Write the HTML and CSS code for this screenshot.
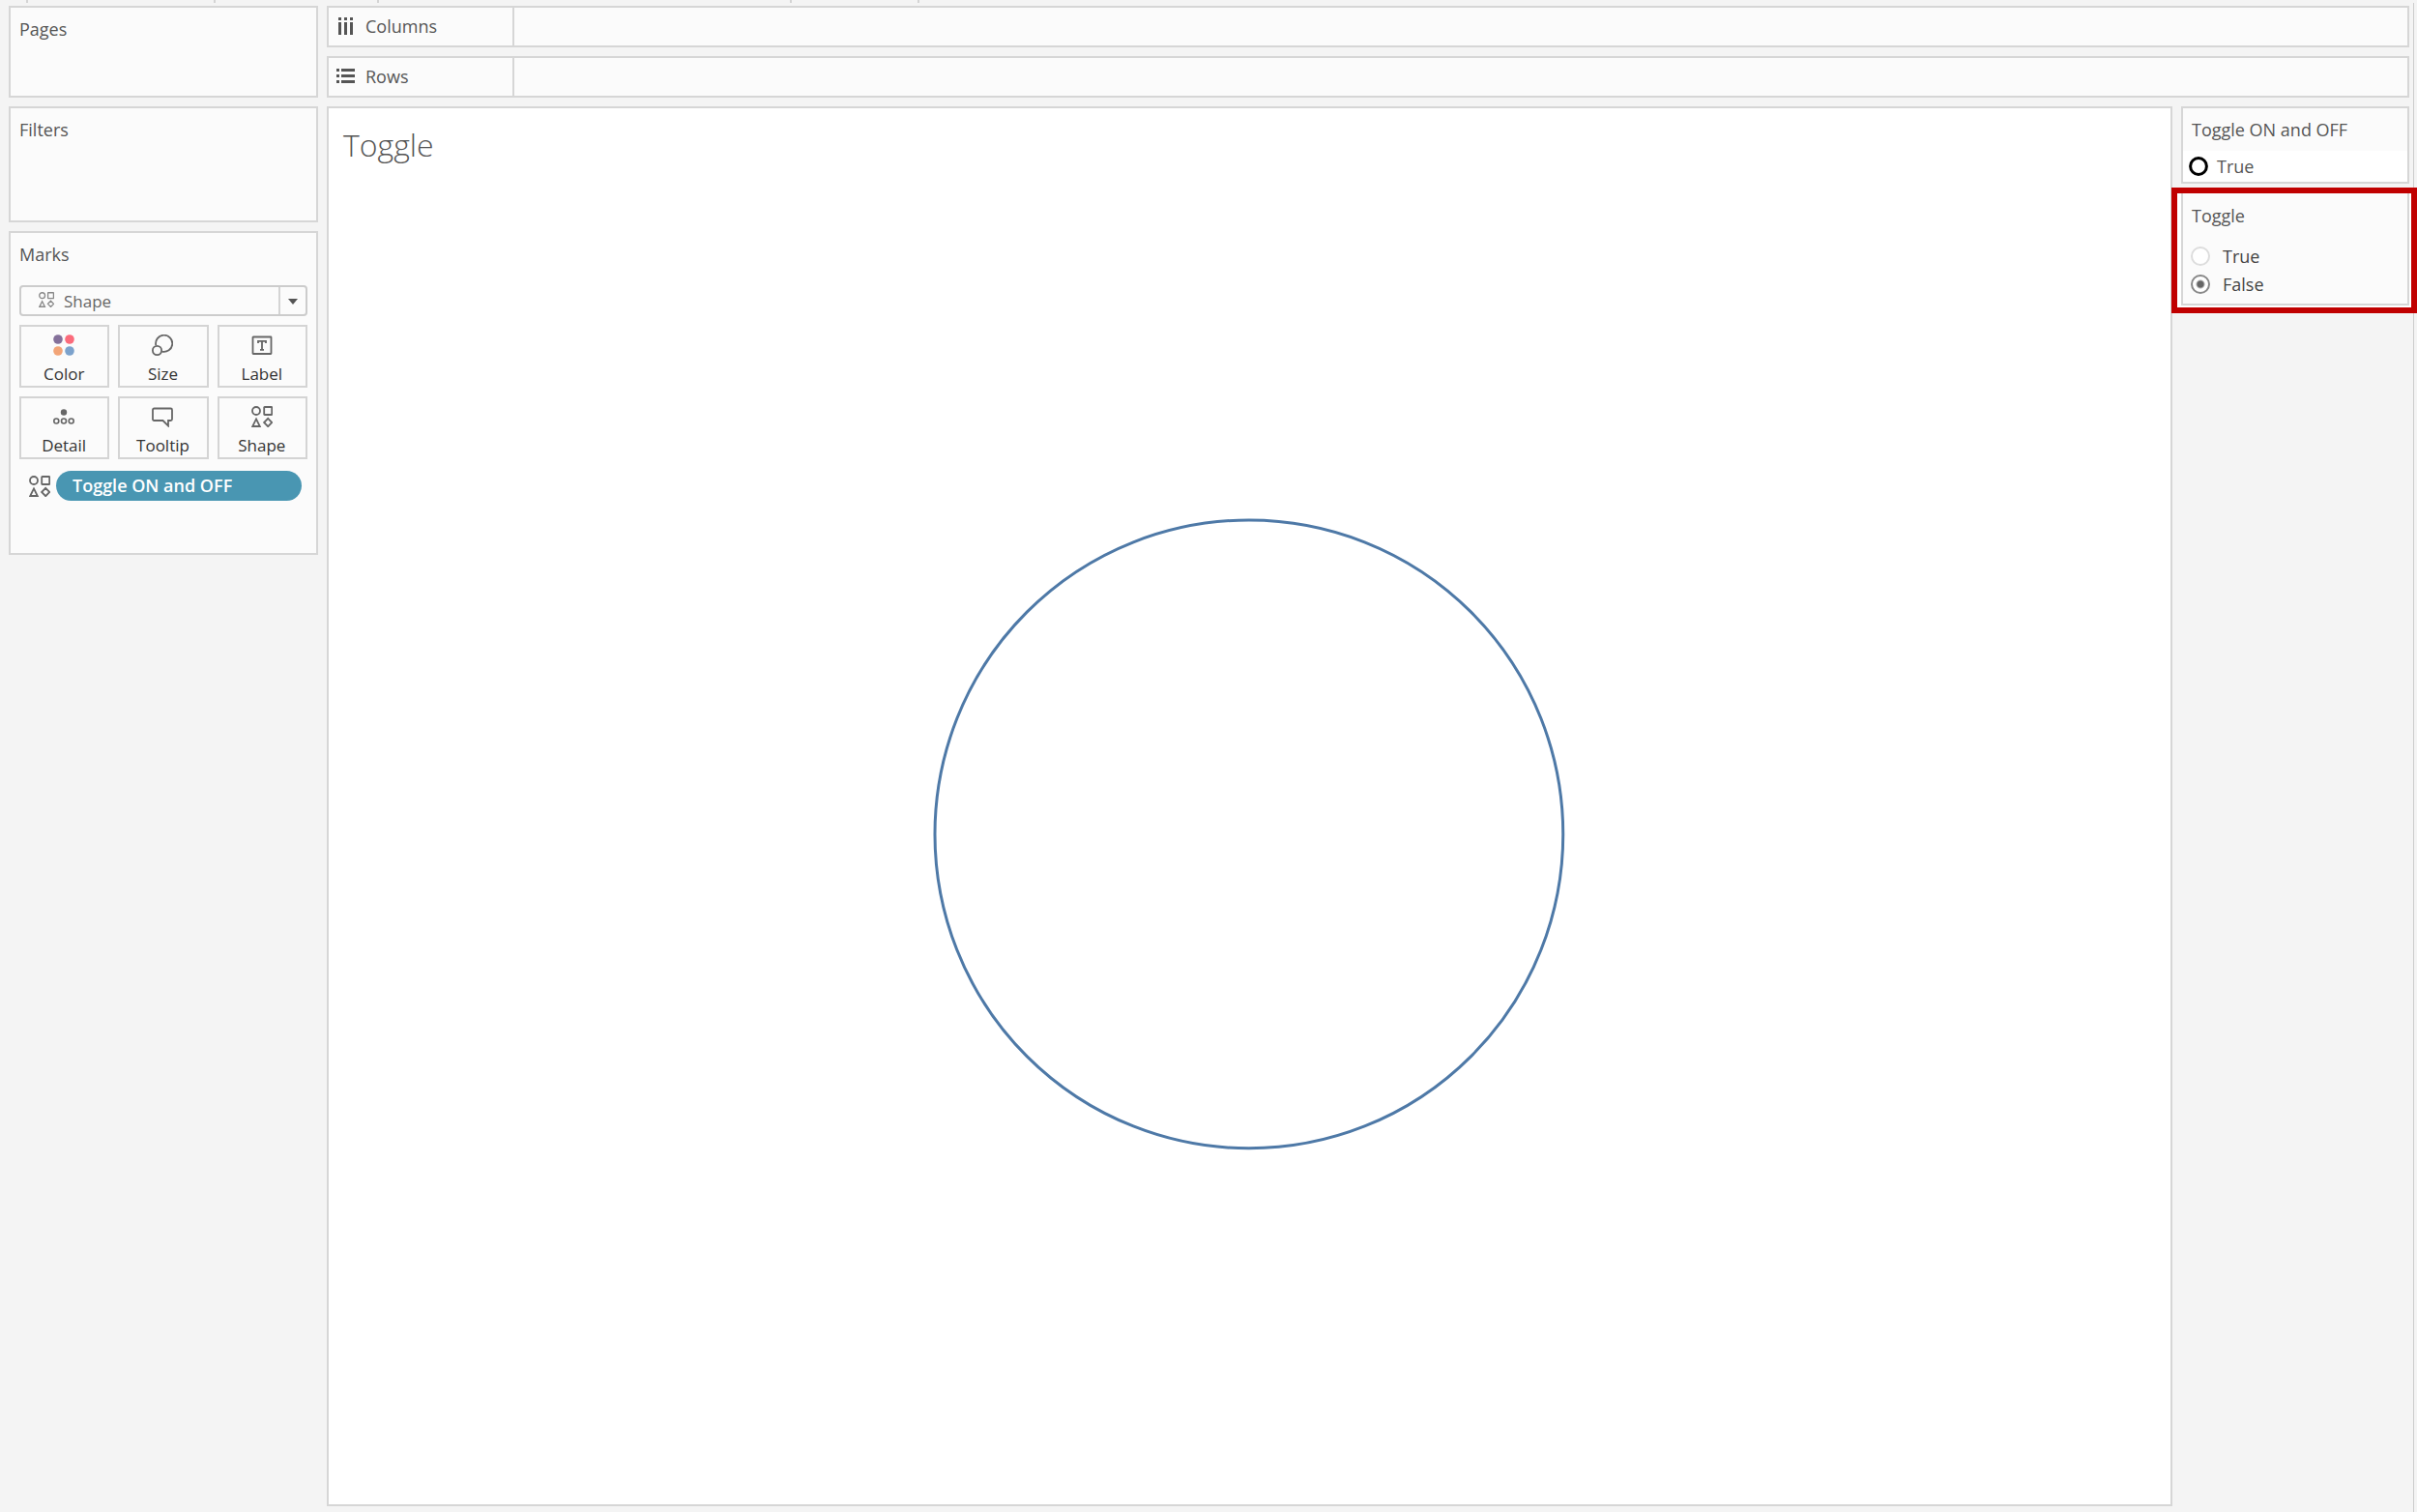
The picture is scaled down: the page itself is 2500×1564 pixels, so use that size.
FILE: index.html
```html
<!DOCTYPE html>
<html lang="en">
  <head>
    <meta charset="UTF-8" />
    <meta name="viewport" content="width=device-width, initial-scale=1.0" />
    <title>Toggle</title>
    <link rel="stylesheet" href="styles.css">
  </head>
  <body>
    <svg width="0" height="0" class="sprite" aria-hidden="true">
      <symbol id="shapes" viewBox="0 0 22 22">
        <g fill="none" stroke="currentColor" stroke-width="1.8">
          <circle cx="5" cy="5" r="4" />
          <rect x="13.2" y="1" width="8" height="8" rx="0.5" />
          <path d="M5 13.4 L8.8 21 H1.2 Z" />
          <path d="M17.2 12.8 L21.3 17 L17.2 21.2 L13.1 17 Z" />
        </g>
      </symbol>
    </svg>

    <div class="toolbar">
      <span class="w-1"></span>
      <span class="w-2"></span>
      <span class="w-3"></span>
      <span class="w-4"></span>
      <span class="w-5"></span>
    </div>

    <div class="workspace">
      <aside class="side">
        <section class="card pages">
          <h2>Pages</h2>
        </section>
        <section class="card filters">
          <h2>Filters</h2>
        </section>
        <section class="card marks">
          <h2>Marks</h2>
          <div class="mark-type">
            <svg class="type-icon" width="16" height="16"><use href="#shapes" /></svg>
            <select aria-label="Mark type">
              <option>Shape</option>
            </select>
            <svg class="arrow" width="30" height="28" viewBox="0 0 30 28">
              <path d="M1 0V28" stroke="#d4d4d4" stroke-width="2" />
              <path d="M10 12H20L15 18Z" fill="#555" />
            </svg>
          </div>
          <div class="mark-buttons">
            <button>
              <svg width="22" height="22" viewBox="0 0 22 22">
                <circle cx="5" cy="5" r="4.8" fill="#84709a" />
                <circle cx="17" cy="5" r="4.8" fill="#fb6b7b" />
                <circle cx="5" cy="17" r="4.8" fill="#f2a477" />
                <circle cx="17" cy="17" r="4.8" fill="#7ca2cc" />
              </svg>
              Color
            </button>
            <button>
              <svg width="22" height="22" viewBox="0 0 22 22" fill="none" stroke="#666" stroke-width="1.8">
                <path d="M4.3 11.2A8.6 8.6 0 1 1 10.5 17.6" />
                <circle cx="5.5" cy="16.5" r="4.6" />
              </svg>
              Size
            </button>
            <button>
              <svg width="22" height="22" viewBox="0 0 22 22" fill="none" stroke="#666" stroke-width="1.8">
                <rect x="1.5" y="2.5" width="19" height="17.5" rx="0.5" />
                <path d="M7 9V6.8H15V9M11 6.8V15.6M9 15.8H13" />
              </svg>
              Label
            </button>
            <button>
              <svg width="22" height="22" viewBox="0 0 22 22" fill="none" stroke="#666" stroke-width="1.6">
                <circle cx="11" cy="6.5" r="3.2" fill="#666" stroke="none" />
                <circle cx="3.3" cy="15.5" r="2.5" />
                <circle cx="11" cy="15.5" r="2.5" />
                <circle cx="18.7" cy="15.5" r="2.5" />
              </svg>
              Detail
            </button>
            <button>
              <svg width="22" height="22" viewBox="0 0 22 22" fill="none" stroke="#666" stroke-width="1.8">
                <path d="M2.5 2.5H19.5Q21 2.5 21 4V13.5Q21 15 19.5 15H17V20.5L11.5 15H2.5Q1 15 1 13.5V4Q1 2.5 2.5 2.5Z" />
              </svg>
              Tooltip
            </button>
            <button>
              <svg width="22" height="22"><use href="#shapes" /></svg>
              Shape
            </button>
          </div>
          <div class="mark-field">
            <svg width="22" height="22"><use href="#shapes" /></svg>
            <button class="pill">Toggle ON and OFF</button>
          </div>
        </section>
      </aside>

      <div class="content">
        <div class="card shelf">
          <div class="shelf-name">
            <svg width="20" height="20" viewBox="0 0 20 20" fill="#555">
              <path d="M2 1h3v3h-3zM8 1h3v3h-3zM14 1h3v3h-3zM2 6h3v13h-3zM8 6h3v13h-3zM14 6h3v13h-3z" />
            </svg>
            Columns
          </div>
        </div>
        <div class="card shelf">
          <div class="shelf-name">
            <svg width="20" height="20" viewBox="0 0 20 20" fill="#555">
              <path d="M0 2h3v3h-3zM0 8h3v3h-3zM0 14h3v3h-3zM5 2h14v3h-14zM5 8h14v3h-14zM5 14h14v3h-14z" />
            </svg>
            Rows
          </div>
        </div>

        <div class="view">
          <main class="card sheet">
            <h1>Toggle</h1>
            <div class="pane">
              <svg class="mark" viewBox="0 0 667 667">
                <circle cx="333" cy="333" r="325" fill="none" stroke="#4e79a7" stroke-width="3" />
              </svg>
            </div>
          </main>

          <aside class="legends">
            <section class="card legend">
              <h2>Toggle ON and OFF</h2>
              <div class="legend-item">
                <svg width="20" height="20" viewBox="0 0 20 20">
                  <circle cx="10" cy="10" r="8.4" fill="none" stroke="#000" stroke-width="3" />
                </svg>
                True
              </div>
            </section>
            <div class="highlight">
              <section class="card parameter">
                <h2>Toggle</h2>
                <label><input type="radio" name="toggle" /> True</label>
                <label><input type="radio" name="toggle" checked /> False</label>
              </section>
            </div>
          </aside>
        </div>
      </div>
    </div>
  </body>
</html>
```

FILE: styles.css
```css
* {
  box-sizing: border-box;
}

body {
  margin: 0;
  min-height: 100vh;
  display: flex;
  flex-direction: column;
  background: #f4f4f4;
  color: #555;
  font-family: 'Open Sans', sans-serif;
  font-size: 18px;
  line-height: 24px;
}

h1,
h2 {
  margin: 0;
  font-size: 18px;
  font-weight: 400;
}

svg {
  display: block;
  flex: none;
}

.sprite {
  position: absolute;
}

/* separators of the toolbar */
.toolbar {
  display: flex;
  height: 3px;
}

.toolbar span {
  border-right: 2px solid #d4d4d4;
}

.w-1 {
  width: 29px;
}

.w-2 {
  width: 194px;
}

.w-3 {
  width: 169px;
}

.w-4 {
  width: 427px;
}

.w-5 {
  width: 132px;
}

.workspace {
  flex: 1;
  display: flex;
  gap: 9px;
  margin-right: 3px;
  padding: 3px 4px 6px 9px;
  border-right: 1px solid #ccc;
}

.card {
  background: #fbfbfb;
  border: 2px solid #d6d6d6;
}

.side {
  width: 320px;
  flex: none;
  display: flex;
  flex-direction: column;
  gap: 9px;
}

.side .card {
  padding: 10px 9px;
}

.pages {
  height: 95px;
}

.filters {
  height: 120px;
}

.marks {
  min-height: 335px;
}

.mark-type {
  position: relative;
  margin: 20px 0 9px;
  color: #888;
}

.mark-type select {
  display: block;
  appearance: none;
  width: 100%;
  height: 32px;
  padding: 0 40px 0 44px;
  border: 2px solid #ccc;
  border-radius: 4px;
  background: #fbfbfb;
  color: #666;
  font: 17px 'Open Sans', sans-serif;
}

.type-icon {
  position: absolute;
  left: 20px;
  top: 7px;
}

.arrow {
  position: absolute;
  right: 0;
  top: 2px;
  pointer-events: none;
}

.mark-buttons {
  display: grid;
  grid-template-columns: repeat(3, 1fr);
  gap: 9px;
}

.mark-buttons button {
  display: flex;
  flex-direction: column;
  align-items: center;
  gap: 7px;
  height: 65px;
  padding: 8px 1px 0 0;
  border: 2px solid #d4d4d4;
  background: #fbfbfb;
  color: #333;
  font: 17px/24px 'Open Sans', sans-serif;
}

.mark-buttons svg,
.mark-field svg {
  color: #666;
}

.mark-field {
  display: flex;
  align-items: center;
  gap: 6px;
  margin: 12px 6px 0 10px;
}

.pill {
  flex: 1;
  height: 31px;
  padding: 0 17px 1px;
  border: 0;
  border-radius: 16px;
  background: #4996b2;
  color: #fff;
  font: 600 18px/24px 'Open Sans', sans-serif;
  text-align: left;
}

.content {
  flex: 1;
  display: flex;
  flex-direction: column;
  gap: 9px;
}

.shelf {
  display: flex;
  height: 43px;
}

.shelf-name {
  display: flex;
  align-items: center;
  gap: 10px;
  width: 192px;
  padding: 0 0 2px 8px;
  border-right: 2px solid #d6d6d6;
}

.view {
  flex: 1;
  display: flex;
  gap: 9px;
}

.sheet {
  flex: 1;
  display: flex;
  flex-direction: column;
  background: #fff;
}

h1 {
  padding: 18px 15px;
  font-size: 32px;
  font-weight: 300;
  line-height: 40px;
}

.pane {
  flex: 1;
  display: flex;
  align-items: center;
  justify-content: center;
  padding-bottom: 18px;
}

.mark {
  width: 35%;
}

.legends {
  width: 236px;
  flex: none;
}

.legends h2 {
  padding: 10px 9px;
}

.legend-item {
  display: flex;
  align-items: center;
  gap: 9px;
  height: 32px;
  padding-left: 6px;
  background: #fff;
}

/* red frame around the parameter control */
.highlight {
  position: relative;
  margin: 4px -8px 0 -10px;
  padding: 0 2px 2px 4px;
  border: 6px solid #c00000;
  background: #fff;
}

.parameter {
  border-top: 0;
  padding-bottom: 6px;
}

.parameter h2 {
  padding: 11px 9px 15px;
}

.parameter label {
  display: flex;
  align-items: center;
  gap: 13px;
  height: 29px;
  padding-left: 8px;
  color: #444;
}

.parameter input {
  appearance: none;
  width: 20px;
  height: 20px;
  margin: 0;
  border: 2px solid #ddd;
  border-radius: 50%;
  background: #fff;
}

.parameter input:checked {
  border-color: #888;
  background: radial-gradient(circle, #666 3px, #fff 5px);
}
```
